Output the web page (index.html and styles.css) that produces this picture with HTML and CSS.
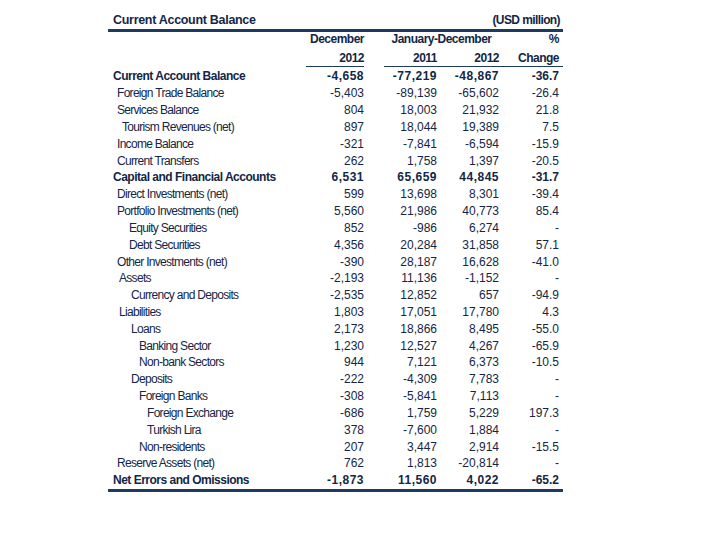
FILE: index.html
```html
<!DOCTYPE html>
<html>
<head>
<meta charset="utf-8">
<link rel="stylesheet" href="styles.css">
</head>
<body>
<div class="sheet">
  <div class="title-bar">
    <span class="title">Current Account Balance</span>
    <span class="unit">(USD million)</span>
  </div>
  <table class="tbl">
    <colgroup>
      <col class="c-label"><col class="c-dec"><col class="c-sp"><col class="c-y1"><col class="c-y2"><col class="c-chg">
    </colgroup>
    <thead>
      <tr class="h1">
        <th></th><th class="num">December</th><th></th><th colspan="2" class="center">January-December</th><th class="num pr">%</th>
      </tr>
      <tr class="h2">
        <th></th><th class="num ul">2012</th><th></th><th class="num ul">2011</th><th class="num ul">2012</th><th class="num ul pr">Change</th>
      </tr>
    </thead>
    <tbody>
      <tr class="b"><td class="l0">Current Account Balance</td><td>-4,658</td><td></td><td>-77,219</td><td>-48,867</td><td class="pr">-36.7</td></tr>
      <tr><td class="l1">Foreign Trade Balance</td><td>-5,403</td><td></td><td>-89,139</td><td>-65,602</td><td class="pr">-26.4</td></tr>
      <tr><td class="l1">Services Balance</td><td>804</td><td></td><td>18,003</td><td>21,932</td><td class="pr">21.8</td></tr>
      <tr><td class="l2">Tourism Revenues (net)</td><td>897</td><td></td><td>18,044</td><td>19,389</td><td class="pr">7.5</td></tr>
      <tr><td class="l1">Income Balance</td><td>-321</td><td></td><td>-7,841</td><td>-6,594</td><td class="pr">-15.9</td></tr>
      <tr><td class="l1">Current Transfers</td><td>262</td><td></td><td>1,758</td><td>1,397</td><td class="pr">-20.5</td></tr>
      <tr class="b"><td class="l0">Capital and Financial Accounts</td><td>6,531</td><td></td><td>65,659</td><td>44,845</td><td class="pr">-31.7</td></tr>
      <tr><td class="l1">Direct Investments (net)</td><td>599</td><td></td><td>13,698</td><td>8,301</td><td class="pr">-39.4</td></tr>
      <tr><td class="l1">Portfolio Investments (net)</td><td>5,560</td><td></td><td>21,986</td><td>40,773</td><td class="pr">85.4</td></tr>
      <tr><td class="l3">Equity Securities</td><td>852</td><td></td><td>-986</td><td>6,274</td><td class="pr">-</td></tr>
      <tr><td class="l3">Debt Securities</td><td>4,356</td><td></td><td>20,284</td><td>31,858</td><td class="pr">57.1</td></tr>
      <tr><td class="l1">Other Investments (net)</td><td>-390</td><td></td><td>28,187</td><td>16,628</td><td class="pr">-41.0</td></tr>
      <tr><td class="l1b">Assets</td><td>-2,193</td><td></td><td>11,136</td><td>-1,152</td><td class="pr">-</td></tr>
      <tr><td class="l4">Currency and Deposits</td><td>-2,535</td><td></td><td>12,852</td><td>657</td><td class="pr">-94.9</td></tr>
      <tr><td class="l1b">Liabilities</td><td>1,803</td><td></td><td>17,051</td><td>17,780</td><td class="pr">4.3</td></tr>
      <tr><td class="l4">Loans</td><td>2,173</td><td></td><td>18,866</td><td>8,495</td><td class="pr">-55.0</td></tr>
      <tr><td class="l5">Banking Sector</td><td>1,230</td><td></td><td>12,527</td><td>4,267</td><td class="pr">-65.9</td></tr>
      <tr><td class="l5">Non-bank Sectors</td><td>944</td><td></td><td>7,121</td><td>6,373</td><td class="pr">-10.5</td></tr>
      <tr><td class="l4">Deposits</td><td>-222</td><td></td><td>-4,309</td><td>7,783</td><td class="pr">-</td></tr>
      <tr><td class="l5">Foreign Banks</td><td>-308</td><td></td><td>-5,841</td><td>7,113</td><td class="pr">-</td></tr>
      <tr><td class="l6">Foreign Exchange</td><td>-686</td><td></td><td>1,759</td><td>5,229</td><td class="pr">197.3</td></tr>
      <tr><td class="l6">Turkish Lira</td><td>378</td><td></td><td>-7,600</td><td>1,884</td><td class="pr">-</td></tr>
      <tr><td class="l5">Non-residents</td><td>207</td><td></td><td>3,447</td><td>2,914</td><td class="pr">-15.5</td></tr>
      <tr><td class="l1">Reserve Assets (net)</td><td>762</td><td></td><td>1,813</td><td>-20,814</td><td class="pr">-</td></tr>
      <tr class="b last"><td class="l0">Net Errors and Omissions</td><td>-1,873</td><td></td><td>11,560</td><td>4,022</td><td class="pr">-65.2</td></tr>
    </tbody>
  </table>
</div>
</body>
</html>
```
FILE: styles.css
```css
html, body {
  margin: 0;
  padding: 0;
  background: #ffffff;
}
body {
  font-family: "Liberation Sans", Arial, sans-serif;
  color: #132645;
}
.sheet {
  width: 455px;
  margin-left: 108px;
  padding-top: 11px;
}
.title-bar {
  display: flex;
  justify-content: space-between;
  align-items: center;
  height: 18px;
  padding: 0 3px 0 5px;
  border-bottom: 3px solid #1d3a63;
  font-weight: bold;
  font-size: 12.5px;
  letter-spacing: -0.3px;
}
.unit {
  font-size: 12px;
  letter-spacing: -0.6px;
}
.tbl {
  width: 455px;
  border-collapse: collapse;
  table-layout: fixed;
}
.c-label { width: 198px; }
.c-dec { width: 58px; }
.c-sp { width: 20px; }
.c-y1 { width: 53px; }
.c-y2 { width: 62px; }
.c-chg { width: 64px; }
th {
  font-weight: bold;
  font-size: 12px;
  letter-spacing: -0.5px;
  padding: 0;
  white-space: nowrap;
  line-height: 14px;
}
.h1 th { height: 14px; padding-top: 0; }
.h2 th { height: 16px; padding-top: 4px; }
.num { text-align: right; }
.center { text-align: center; }
.ul { border-bottom: 1px solid #1d3a63; }
th.pr, td.pr { padding-right: 4px; }
td {
  height: 16.83px;
  padding: 0;
  font-size: 12px;
  text-align: right;
  white-space: nowrap;
  line-height: 14px;
}
tbody tr:first-child td { padding-top: 1px; }
td:first-child {
  text-align: left;
  letter-spacing: -0.7px;
}
tr.b td {
  font-weight: bold;
  letter-spacing: 0.5px;
}
tr.b td.pr { letter-spacing: 0; }
tr.b td:first-child { letter-spacing: -0.5px; }
tr.last td { border-bottom: 3px solid #1d3a63; }
.l0 { padding-left: 5px; }
.l1 { padding-left: 9px; }
.l1b { padding-left: 11px; }
.l2 { padding-left: 14px; }
.l3 { padding-left: 21px; }
.l4 { padding-left: 23px; }
.l5 { padding-left: 31px; }
.l6 { padding-left: 39px; }
```
